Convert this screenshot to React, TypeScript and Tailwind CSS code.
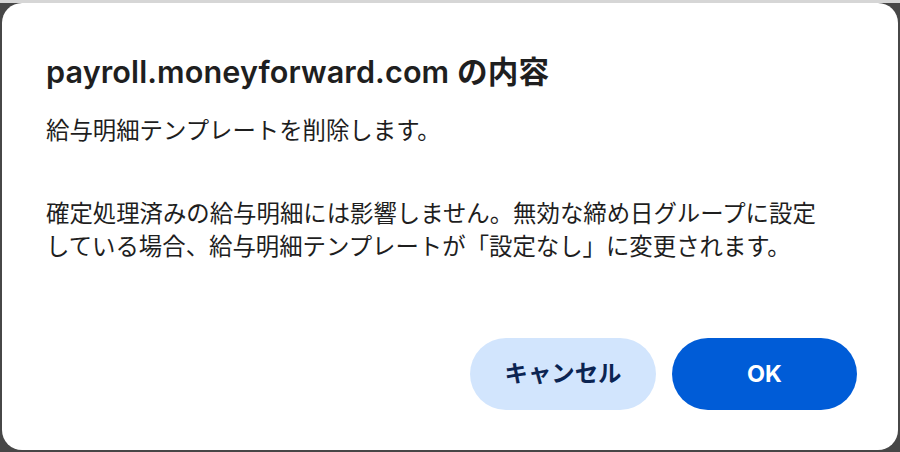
import React from "react";

const jp = '"Inter", "Noto Sans CJK JP", sans-serif';

export default function App() {
  return (
    <div className="w-[900px] h-[452px] bg-[#474747] flex flex-col overflow-hidden">
      <div className="h-[3px] bg-[#d6d6d6] shrink-0" />
      <div className="flex-1 px-[2px] pb-[2px] flex flex-col">
        <div
          className="flex-1 bg-white rounded-[20px] pl-[44px] pr-[41px] pt-[51px] flex flex-col"
          style={{ fontFamily: jp }}
        >
          <h1 className="text-[30.6px] leading-[36px] font-semibold text-[#1f1f1f] tracking-[0.1px]">
            payroll.moneyforward.com の内容
          </h1>
          <div className="mt-[24px] text-[23.4px] leading-[33px] text-[#1e1e1e]">
            <p>給与明細テンプレートを削除します。</p>
            <p className="mt-[50px]">
              確定処理済みの給与明細には影響しません。無効な締め日グループに設定
              <br />
              している場合、給与明細テンプレートが「設定なし」に変更されます。
            </p>
          </div>
          <div className="mt-auto mb-[40px] flex justify-end gap-[16px]">
            <button className="w-[186px] h-[72px] rounded-full bg-[#d2e5fd] text-[#0b2452] text-[23.4px] font-bold">
              キャンセル
            </button>
            <button className="w-[185px] h-[72px] rounded-full bg-[#005cd7] text-white text-[23.4px] font-bold">
              OK
            </button>
          </div>
        </div>
      </div>
    </div>
  );
}
